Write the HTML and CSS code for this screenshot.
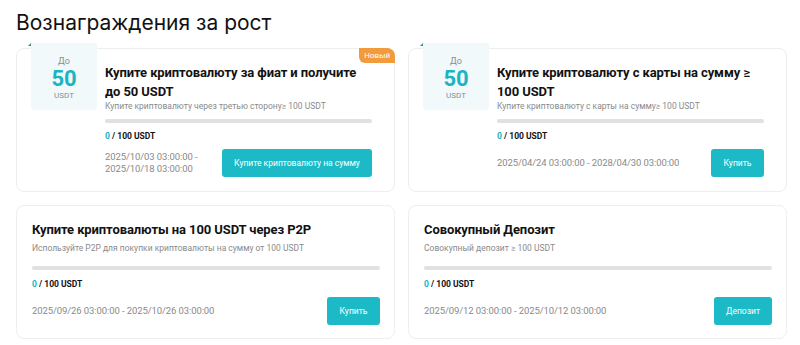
FILE: index.html
```html
<!DOCTYPE html>
<html>
<head>
  <title>Вознаграждения за рост</title>
  <link rel="stylesheet" href="styles.css">
</head>
<body>
  <h1 class="page-title">Вознаграждения за рост</h1>
  <div class="tasks">
    <!-- Fiat purchase task -->
    <div class="task task-reward">
      <span class="badge">Новый</span>
      <div class="reward">
        <div class="reward-up">До</div>
        <div class="reward-amount">50</div>
        <div class="reward-unit">USDT</div>
      </div>
      <div class="task-body">
        <div class="task-title">Купите криптовалюту за фиат и получите до 50 USDT</div>
        <div class="task-desc">Купите криптовалюту через третью сторону≥ 100 USDT</div>
        <div class="progress"></div>
        <div class="progress-text"><span class="done">0</span> / 100 USDT</div>
        <div class="task-footer">
          <div class="dates">2025/10/03 03:00:00 -<br>2025/10/18 03:00:00</div>
          <a class="btn btn-wide" href="#">Купите криптовалюту на сумму</a>
        </div>
      </div>
    </div>
    <!-- Card purchase task -->
    <div class="task task-reward">
      <div class="reward">
        <div class="reward-up">До</div>
        <div class="reward-amount">50</div>
        <div class="reward-unit">USDT</div>
      </div>
      <div class="task-body">
        <div class="task-title">Купите криптовалюту с карты на сумму ≥ 100 USDT</div>
        <div class="task-desc">Купите криптовалюту с карты на сумму≥ 100 USDT</div>
        <div class="progress"></div>
        <div class="progress-text"><span class="done">0</span> / 100 USDT</div>
        <div class="task-footer">
          <div class="dates">2025/04/24 03:00:00 - 2028/04/30 03:00:00</div>
          <a class="btn" href="#">Купить</a>
        </div>
      </div>
    </div>
    <!-- P2P task -->
    <div class="task">
      <div class="task-body">
        <div class="task-title">Купите криптовалюты на 100 USDT через P2P</div>
        <div class="task-desc">Используйте P2P для покупки криптовалюты на сумму от 100 USDT</div>
        <div class="progress"></div>
        <div class="progress-text"><span class="done">0</span> / 100 USDT</div>
        <div class="task-footer">
          <div class="dates">2025/09/26 03:00:00 - 2025/10/26 03:00:00</div>
          <a class="btn" href="#">Купить</a>
        </div>
      </div>
    </div>
    <!-- Deposit task -->
    <div class="task">
      <div class="task-body">
        <div class="task-title">Совокупный Депозит</div>
        <div class="task-desc">Совокупный депозит ≥ 100 USDT</div>
        <div class="progress"></div>
        <div class="progress-text"><span class="done">0</span> / 100 USDT</div>
        <div class="task-footer">
          <div class="dates">2025/09/12 03:00:00 - 2025/10/12 03:00:00</div>
          <a class="btn btn-deposit" href="#">Депозит</a>
        </div>
      </div>
    </div>
  </div>
</body>
</html>
```

FILE: styles.css
```css
/*Page*/
body {
  margin: 0;
  padding: 0 13px 0 16px;
  background: #fff;
  color: #121212;
  font-family: Roboto, "Noto Sans", sans-serif;
}
.page-title {
  margin: 0;
  padding-top: 9px;
  height: 39px;
  font-family: Inter, sans-serif;
  font-size: 21px;
  font-weight: 400;
  line-height: 28px;
}
/*Grid of task cards*/
.tasks {
  display: grid;
  grid-template-columns: 1fr 1fr;
  grid-template-rows: 144px 134px;
  gap: 13px;
}
.task {
  position: relative;
  display: flex;
  border: 1px solid #eeeeee;
  border-radius: 8px;
  padding: 14px 14px 12px 15px;
}
.task-reward {
  padding: 0 22px 12px 14px;
}
/*New badge*/
.badge {
  position: absolute;
  top: -1px;
  right: -1px;
  background: #f29b3c;
  color: #fff;
  font-size: 8px;
  line-height: 15px;
  padding: 0 5px;
  border-radius: 0 8px 0 6px;
}
/*Reward box*/
.reward {
  position: relative;
  flex: none;
  width: 66px;
  height: 67px;
  margin-top: -6px;
  margin-right: 8px;
  background: #f1f9fb;
  border-radius: 0 0 4px 4px;
  text-align: center;
  color: #8c8c8c;
}
.reward::before {
  content: "";
  position: absolute;
  top: 0;
  left: -3px;
  border-bottom: 3px solid #2f8f99;
  border-left: 3px solid transparent;
}
.reward-up {
  font-size: 9px;
  padding-top: 12px;
  line-height: 12px;
}
.reward-amount {
  font-size: 22px;
  font-weight: 700;
  color: #1ab4c3;
  line-height: 24px;
}
.reward-unit {
  font-size: 8px;
  line-height: 10px;
}
/*Card content*/
.task-body {
  flex: 1;
  display: flex;
  flex-direction: column;
}
.task-body > * {
  flex: none;
}
.task-reward .task-body {
  padding-top: 14px;
}
.task-title {
  font-size: 13px;
  font-weight: 700;
  line-height: 20px;
  letter-spacing: -0.1px;
}
.task-reward .task-title {
  line-height: 19px;
}
.task-desc {
  margin-top: 2px;
  font-size: 8.5px;
  line-height: 12px;
  color: #8a8a8a;
}
.task-reward .task-desc {
  margin-top: -1px;
}
.progress {
  margin-top: 12px;
  height: 4px;
  border-radius: 2px;
  background: #e1e1e1;
}
.task-reward .progress {
  margin-top: 7px;
}
.progress-text {
  margin-top: 8px;
  font-size: 8.5px;
  font-weight: 700;
  line-height: 12px;
}
.task-reward .progress-text {
  margin-top: 7px;
}
.done {
  color: #1ab4c3;
}
.task-footer {
  margin-top: 7px;
  display: flex;
  align-items: center;
  justify-content: space-between;
  gap: 20px;
}
.task-reward .task-footer {
  margin-top: 7px;
}
.dates {
  font-size: 9.5px;
  line-height: 12px;
  letter-spacing: -0.1px;
  color: #8a8a8a;
  white-space: nowrap;
}
/*Buttons*/
.btn {
  flex: none;
  display: block;
  box-sizing: border-box;
  width: 53px;
  background: #1bbac6;
  color: #fff;
  font-size: 8.5px;
  line-height: 28px;
  text-align: center;
  white-space: nowrap;
  border-radius: 3px;
  text-decoration: none;
}
.btn-wide {
  width: 150px;
}
.btn-deposit {
  width: 58px;
}
```
